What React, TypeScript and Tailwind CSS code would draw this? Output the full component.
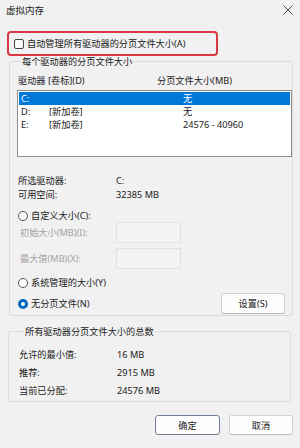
const font = { fontFamily: '"Noto Sans", "Noto Sans CJK SC", sans-serif' };

const drives = [
  { letter: "C:", label: "", size: "无", selected: true },
  { letter: "D:", label: "[新加卷]", size: "无", selected: false },
  { letter: "E:", label: "[新加卷]", size: "24576 - 40960", selected: false },
];

const totals = [
  { label: "允许的最小值:", value: "16 MB" },
  { label: "推荐:", value: "2915 MB" },
  { label: "当前已分配:", value: "24576 MB" },
];

function Radio({ checked }: { checked?: boolean }) {
  return checked ? (
    <span className="w-[10px] h-[10px] rounded-full bg-[#0067c0] flex items-center justify-center shrink-0">
      <span className="w-[4px] h-[4px] rounded-full bg-white" />
    </span>
  ) : (
    <span className="w-[10px] h-[10px] rounded-full border border-[#555] bg-[#fbfbfb] shrink-0" />
  );
}

export default function App() {
  return (
    <div
      className="w-[300px] h-[448px] bg-[#f1f1f1] text-[9.2px] leading-[13px] text-[#1b1b1b] flex flex-col overflow-hidden"
      style={font}
    >
      {/* Title bar */}
      <div className="h-[20px] flex items-center justify-between pl-[6px] pr-[7px]">
        <span className="text-[9.5px]">虚拟内存</span>
        <svg width="10" height="10" viewBox="0 0 10 10" stroke="#333" strokeWidth="0.9">
          <path d="M0.5 0.5L9.5 9.5M9.5 0.5L0.5 9.5" />
        </svg>
      </div>

      {/* Highlighted checkbox */}
      <div className="mt-[11px] ml-[7px] w-[211px] h-[25px] border-2 border-[#d9393f] rounded-[4px] flex items-center pl-[5px] gap-[3px]">
        <span className="w-[10px] h-[10px] border border-[#444] rounded-[2px] bg-[#fbfbfb]" />
        <span className="whitespace-nowrap">自动管理所有驱动器的分页文件大小(A)</span>
      </div>

      {/* Per-drive group */}
      <fieldset className="ml-[9px] w-[282px] h-[260px] border border-[#dcdcdc] rounded-[3px] pl-[7px] flex flex-col">
        <legend className="ml-[4px] px-[1px] leading-[11px] whitespace-nowrap">每个驱动器的分页文件大小</legend>

        <div className="mt-[7px] h-[13px] flex pl-[1px]">
          <span className="w-[139px]">驱动器 [卷标](D)</span>
          <span>分页文件大小(MB)</span>
        </div>

        <div className="mt-[3px] h-[67px] w-[275px] bg-white border border-[#8f8f8f] p-[1px] flex flex-col">
          {drives.map((d) => (
            <div
              key={d.letter}
              className={
                d.selected
                  ? "h-[13px] flex items-center pl-[2px] bg-[#0078d7] text-white"
                  : "h-[13px] flex items-center pl-[2px]"
              }
            >
              <span className="w-[28px]">{d.letter}</span>
              <span className="w-[134px]">{d.label}</span>
              <span>{d.size}</span>
            </div>
          ))}
        </div>

        <div className="mt-[16px] flex flex-col pl-[1px]">
          <div className="h-[14px] flex items-center">
            <span className="w-[98px]">所选驱动器:</span>
            <span>C:</span>
          </div>
          <div className="h-[14px] flex items-center">
            <span className="w-[98px]">可用空间:</span>
            <span>32385 MB</span>
          </div>
        </div>

        <div className="mt-[8px] h-[13px] flex items-center gap-[3px] pl-[1px]">
          <Radio />
          <span>自定义大小(C):</span>
        </div>

        <div className="h-[21px] flex items-center pl-[3px] text-[#a3a3a3]">
          <span className="w-[96px]">初始大小(MB)(I):</span>
          <span className="w-[65px] h-[21px] border border-[#e2e2e2] bg-[#f3f3f3]" />
        </div>
        <div className="mt-[5px] h-[21px] flex items-center pl-[3px] text-[#a3a3a3]">
          <span className="w-[96px]">最大值(MB)(X):</span>
          <span className="w-[65px] h-[21px] border border-[#e2e2e2] bg-[#f3f3f3]" />
        </div>

        <div className="mt-[7px] h-[13px] flex items-center gap-[3px] pl-[1px]">
          <Radio />
          <span>系统管理的大小(Y)</span>
        </div>

        <div className="mt-[4px] h-[21px] flex items-center justify-between pl-[1px] pr-[7px]">
          <div className="flex items-center gap-[3px]">
            <Radio checked />
            <span>无分页文件(N)</span>
          </div>
          <button className="w-[64px] h-[21px] bg-[#fdfdfd] border border-[#d0d0d0] border-b-[#b8b8b8] rounded-[3px]">
            设置(S)
          </button>
        </div>
      </fieldset>

      {/* Totals group */}
      <fieldset className="mt-[10px] ml-[8px] w-[283px] h-[76px] border border-[#dcdcdc] rounded-[3px] pl-[10px] flex flex-col">
        <legend className="ml-[5px] px-[1px] leading-[11px] whitespace-nowrap">所有驱动器分页文件大小的总数</legend>
        <div className="mt-[8px] flex flex-col">
          {totals.map((t) => (
            <div key={t.label} className="h-[18px] flex items-center">
              <span className="w-[98px]">{t.label}</span>
              <span>{t.value}</span>
            </div>
          ))}
        </div>
      </fieldset>

      {/* Dialog buttons */}
      <div className="mt-[13px] flex justify-end gap-[9px] pr-[7px]">
        <button className="w-[65px] h-[20px] bg-[#fdfdfd] border border-[#6f8094] rounded-[3px]">确定</button>
        <button className="w-[64px] h-[20px] bg-[#fdfdfd] border border-[#d0d0d0] border-b-[#b8b8b8] rounded-[3px]">
          取消
        </button>
      </div>
    </div>
  );
}
